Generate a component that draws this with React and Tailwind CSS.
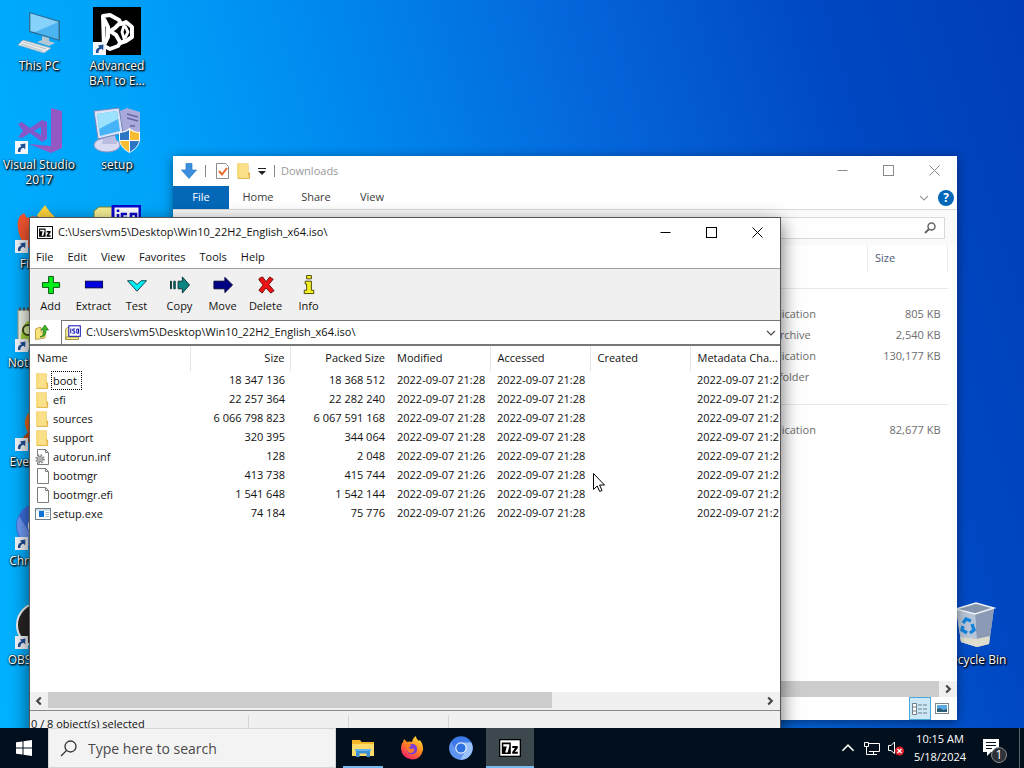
import React from "react";

const ARCHIVE_PATH = "C:\\Users\\vm5\\Desktop\\Win10_22H2_English_x64.iso\\";

/* ---------- shared glyphs ---------- */

function ShortcutArrow() {
  return (
    <svg viewBox="0 0 13 13" className="absolute bottom-0 left-0 h-[13px] w-[13px]" aria-hidden="true">
      <rect width="13" height="13" fill="#f3f6fa" />
      <path d="M3 11 C2.5 8 4 6 6.4 5.6 L5 3.6 L10.4 2.4 L10.2 8.2 L8.4 6.8 C6.4 7.2 5.4 8.6 5.4 11Z" fill="#1f4f96" />
    </svg>
  );
}

function Folder({ className }) {
  return (
    <svg viewBox="0 0 14 16" preserveAspectRatio="none" className={className} aria-hidden="true">
      <path d="M.5 .5 H11.5 V9 L13 10 V15.500 H.5Z" fill="#e3bb4c" />
      <path d="M.5 .5 H11 V10.5 L12 15.500 H.5Z" fill="#fbe08a" />
      <path d="M.5 .5 H2.5 V15.500 H.5Z" fill="#f8d873" />
      <path d="M12.5 10 V15.4 H1" fill="none" stroke="#e0b44a" />
    </svg>
  );
}

function SevenZip({ className }) {
  return (
    <svg viewBox="0 0 22 18" className={className} aria-hidden="true">
      <rect width="22" height="18" fill="#000" />
      <rect x="1.3" y="1.3" width="19.4" height="15.4" fill="#fff" />
      <rect x="2.800" y="3.500" width="9" height="11.500" fill="#000" />
      <path d="M4.3 5.200 H10.300 V7.400 L8.600 13.400 H6.200 L7.800 7.400 H4.300Z" fill="#fff" />
      <path d="M13.300 7 H18.800 V9 L15.900 12.800 H18.800 V14.800 H13.200 V12.900 L16 9 H13.300Z" fill="#000" />
    </svg>
  );
}

function IsoIcon({ className }) {
  return (
    <svg viewBox="0 0 16 16" className={className} aria-hidden="true">
      <path d="M.7 4 L2.5 2.5 H6 V14.5 H.7Z" fill="#f6ee9a" stroke="#8a8420" strokeWidth=".8" />
      <path d="M1 12 H13.500 V14.500 H1Z" fill="#f6ee9a" stroke="#8a8420" strokeWidth=".8" />
      <rect x="3.8" y=".8" width="11.5" height="10.5" fill="#fff" stroke="#1010b8" strokeWidth="1" />
      <path d="M5.8 3.5 V8.5 M10.2 4 H7.8 V6 H9.8 V8.2 H7.4 M11.8 4 H13.5 V8.2 H11.8Z" fill="none" stroke="#1010b8" strokeWidth="1" />
    </svg>
  );
}

/* ---------- desktop icons ---------- */

const art = {
  pc: (
    <svg viewBox="0 0 48 48" className="h-12 w-12">
      <path d="M14 5 L45 14 V34 L14 25Z" fill="#2f6c94" />
      <path d="M15.500 6.5 L43.500 15 V32.5 L15.500 24Z" fill="#4db4f2" />
      <path d="M15.500 6.5 L43.500 15 L20 25 L15.500 24Z" fill="#86d2fb" />
      <path d="M27 29 L34 31 V34 L40 36 L34 39 L22 35 L27 33Z" fill="#b5c7d2" />
      <path d="M8 33 L36 41 L29 46 L3 38Z" fill="#e8eced" stroke="#92a5ae" strokeWidth=".7" />
      <path d="M8 35 L31 42 M6 37 L28 44" stroke="#b6c1c7" />
    </svg>
  ),
  bat: (
    <svg viewBox="0 0 48 48" className="h-12 w-12">
      <rect width="48" height="48" fill="#000" />
      <path d="M10 9 L17 8 L26 13 L28 17 L33 15 L39 20 V30 L33 34 L27 36 L25 39 L17 42 L11 39Z" fill="none" stroke="#fff" strokeWidth="4" strokeLinejoin="round" />
      <path d="M11 12 L15 20 V30 L11 38 M27 16 L22 21 L17 24 L23 28 L27 35" fill="none" stroke="#fff" strokeWidth="4" />
      <path d="M32 15 L29 25 L32 35 M32 19 L35 25 L32 31" fill="none" stroke="#fff" strokeWidth="2.800" />
    </svg>
  ),
  vs: (
    <svg viewBox="0 0 48 48" className="h-12 w-12">
      <path d="M36 2 L47 5 V42 L36 47 L14 38 L36 40Z" fill="#9458c4" />
      <path d="M3 18 L7 16 L15 22 L27 14 L32 16 V33 L27 36 L15 27 L7 32 L3 31 L8 25Z M26 21 L19 25 L26 29Z" fill="#8558ca" fillRule="evenodd" />
    </svg>
  ),
  setup: (
    <svg viewBox="0 0 48 48" className="h-12 w-12">
      <path d="M27 5 L34 2 L47 6 V36 L38 39 L27 32Z" fill="#aaa9dc" />
      <path d="M34 8 L45 11 M34 12 L45 15 M37 20 H42" stroke="#6467a3" strokeWidth="1.5" />
      <ellipse cx="14" cy="39" rx="13" ry="7" fill="#d7daf0" stroke="#9094c1" />
      <path d="M11 29 H22 L24 38 H9Z" fill="#b9bde2" />
      <path d="M1 5 L26 2 L30 27 L5 33Z" fill="#dbe4f7" stroke="#7387bc" />
      <path d="M4 8 L24 5 L27 25 L7 30Z" fill="#47b3f7" />
      <path d="M4 8 L24 5 L25 13 L6 23Z" fill="#9be2ff" />
      <path d="M26 26 Q32 26 36.500 22 Q41 26 47 26 V34 Q46 42 36.500 47 Q27 42 26 34Z" fill="#fff" />
      <path d="M27 27 Q32 27 36 24 V34 H27Z M37 35 H46 Q45 41 37 46Z" fill="#2d76c4" />
      <path d="M37 24 Q41 27 46 27 V34 H37Z M27 35 H36 V46 Q28 41 27 35Z" fill="#f7bd32" />
    </svg>
  ),
  firefox: (
    <svg viewBox="0 0 48 48" className="h-12 w-12">
      <path d="M3 24 Q1 12 9 8 L12 13 Q19 10 22 12 L30 1 Q35 8 40 12 Q47 20 45 30 Q40 46 24 46 Q6 44 3 24Z" fill="#f4562f" />
      <path d="M22 10 L30 0 Q35 8 40 12 L45 24 L30 20Z" fill="#ffd43d" />
    </svg>
  ),
  iso: (
    <svg viewBox="0 0 48 48" className="h-12 w-12">
      <path d="M1 14 L1 6 L6 2 H20 V46 H1Z" fill="#f5ef94" stroke="#77873b" />
      <rect x="20" y="1" width="27" height="24" fill="#fff" stroke="#0808ce" strokeWidth="3" />
      <path d="M25 9 V19 M25 4.500 V7 M34 9 H29 V13 H33 V18 H28 M38 9 H43 V18 H38Z" stroke="#0808ce" strokeWidth="2.600" fill="none" />
    </svg>
  ),
  notepad: (
    <svg viewBox="0 0 48 48" className="h-12 w-12">
      <rect x="3" y="6" width="42" height="40" fill="#eef3e6" stroke="#8a9a80" />
      <path d="M4 5 H44" stroke="#555" strokeWidth="3" strokeDasharray="2 2" />
      <path d="M6 38 Q5 20 15 16 Q28 14 30 38Z" fill="#a6d63c" />
      <circle cx="13" cy="26" r="5" fill="#e2f3a6" stroke="#394b16" strokeWidth="2" />
    </svg>
  ),
  everything: (
    <svg viewBox="0 0 48 48" className="h-12 w-12">
      <circle cx="26" cy="20" r="13" fill="none" stroke="#e9681a" strokeWidth="6" />
      <path d="M19 28 L5 43" stroke="#bd4b10" strokeWidth="7" />
    </svg>
  ),
  chromium: (
    <svg viewBox="0 0 48 48" className="h-12 w-12">
      <circle cx="24" cy="24" r="23" fill="#3d6fe0" />
      <path d="M4 14 A23 23 0 0 0 20 46 L30 30 H14Z" fill="#6f9af4" />
      <circle cx="24" cy="24" r="11" fill="#fff" />
      <circle cx="24" cy="24" r="8" fill="#3575e8" />
    </svg>
  ),
  obs: (
    <svg viewBox="0 0 48 48" className="h-12 w-12">
      <circle cx="24" cy="24" r="22" fill="#292525" stroke="#f1f1f1" strokeWidth="2" />
      <circle cx="24" cy="16" r="7" fill="#ddd" />
    </svg>
  ),
  bin: (
    <svg viewBox="0 0 48 48" className="h-12 w-12">
      <path d="M5 8 L25 2 L43 7 L38 43 L26 46 L10 41Z" fill="#c4ccd8" />
      <path d="M24 12 L43 7 L38 43 L26 46Z" fill="#8b9bb5" />
      <path d="M5 8 L24 12 L26 46 L10 41Z" fill="#b7c5d6" />
      <path d="M5 8 L25 2 L43 7 L24 13Z" fill="#8594ad" stroke="#eef2f7" strokeWidth="1.4" />
      <path d="M9 36 L25 38 L39 35 L38 43 L26 46 L10 41Z" fill="#dedccd" />
      <path d="M12 22 L15 18 L20 20 M21 23 L23 29 L19 32 M16 32 L11 29 L12 25" fill="none" stroke="#1583dc" strokeWidth="3.4" />
    </svg>
  ),
};

function DesktopIcon({ icon, label, shortcut }) {
  return (
    <a href="#" className="flex h-[99px] w-[78px] flex-col items-center pt-[7px] text-center text-[12px] leading-[15px] text-white [text-shadow:1px_1px_2px_#000,1px_1px_2px_#000,0_0_2px_rgba(0,0,0,.8)]">
      <span className="relative mb-[3px] block h-12 w-12">
        {art[icon]}
        {shortcut && <ShortcutArrow />}
      </span>
      <span className="whitespace-pre">{label}</span>
    </a>
  );
}

const DESKTOP = [
  { icon: "pc", label: "This PC" },
  { icon: "bat", label: "Advanced\nBAT to E...", shortcut: true },
  { icon: "vs", label: "Visual Studio\n2017", shortcut: true },
  { icon: "setup", label: "setup" },
  { icon: "firefox", label: "Firefox", shortcut: true },
  { icon: "iso", label: "" },
  { icon: "notepad", label: "Notepad++", shortcut: true },
  null,
  { icon: "everything", label: "Everything", shortcut: true },
  null,
  { icon: "chromium", label: "Chromium", shortcut: true },
  null,
  { icon: "obs", label: "OBS Studio", shortcut: true },
];

/* ---------- window controls ---------- */

function WindowControls({ color }) {
  return (
    <div className={`flex ${color}`}>
      <button aria-label="Minimize" className="flex h-[29px] w-[45px] items-center justify-center">
        <svg viewBox="0 0 11 11" className="h-[11px] w-[11px]"><path d="M.5 5.500 H10.500" stroke="currentColor" /></svg>
      </button>
      <button aria-label="Maximize" className="flex h-[29px] w-[46px] items-center justify-center">
        <svg viewBox="0 0 11 11" className="h-[11px] w-[11px]"><rect x=".5" y=".5" width="10" height="10" fill="none" stroke="currentColor" /></svg>
      </button>
      <button aria-label="Close" className="flex h-[29px] w-[46px] items-center justify-center">
        <svg viewBox="0 0 11 11" className="h-[11px] w-[11px]"><path d="M.5 .5 L10.500 10.500 M10.500 .5 L.5 10.500" stroke="currentColor" /></svg>
      </button>
    </div>
  );
}

function Chevron({ dir, className }) {
  const d = { down: "M1 3 L5 7 L9 3", up: "M1 7 L5 3 L9 7", left: "M6.500 2 L3.500 5 L6.500 8", right: "M3.500 2 L6.500 5 L3.500 8" }[dir];
  const weight = dir === "left" || dir === "right" ? 1.8 : 1.1;
  return (
    <svg viewBox="0 0 10 10" className={className} aria-hidden="true">
      <path d={d} fill="none" stroke="currentColor" strokeWidth={weight} />
    </svg>
  );
}

/* ---------- Downloads explorer window ---------- */

const DOWNLOADS = [
  [
    ["Application", "805 KB"],
    ["7z Archive", "2,540 KB"],
    ["Application", "130,177 KB"],
    ["File folder", ""],
  ],
  [["Application", "82,677 KB"]],
];

function ExplorerWindow() {
  return (
    <section aria-label="Downloads" className="absolute left-[173px] top-[156px] flex h-[564px] w-[784px] flex-col bg-white text-[11px] text-[#6d6d6d] shadow-[0_2px_10px_rgba(0,0,0,0.45)]">
      <header className="flex h-[30px] items-start">
        <div className="flex h-full flex-1 items-center pl-2">
          <svg viewBox="0 0 16 16" className="h-4 w-4" aria-hidden="true"><path d="M5 .5 H11 V7 H15.5 L8 15.5 L.5 7 H5Z" fill="#3b8fdd" stroke="#2878c4" strokeWidth=".7" /></svg>
          <span className="ml-2 h-3 w-px bg-[#888]" />
          <svg viewBox="0 0 13 16" className="ml-[10px] h-4 w-[13px]" aria-hidden="true"><path d="M.5 .5 H9.5 L12.500 3.500 V15.500 H.5Z" fill="#fff" stroke="#8d8d8d" /><path d="M3 8 L6 11.500 L11 5" fill="none" stroke="#e8682c" strokeWidth="2" /></svg>
          <Folder className="ml-2 h-4 w-[14px]" />
          <svg viewBox="0 0 8 8" className="ml-[7px] h-2 w-2" aria-hidden="true"><path d="M0 1.500 H8" stroke="#222" /><path d="M0 4 H8 L4 8Z" fill="#222" /></svg>
          <span className="ml-2 h-3 w-px bg-[#888]" />
          <span className="ml-[6px] text-[#999]">Downloads</span>
        </div>
        <WindowControls color="text-[#8a8a8a]" />
      </header>
      <nav className="flex h-6 items-center border-b border-[#dadbdc] text-[#3c3c3c]">
        <button className="h-full w-14 bg-[#0467b8] text-white">File</button>
        <button className="h-full w-[58px]">Home</button>
        <button className="h-full w-[58px]">Share</button>
        <button className="h-full w-[54px]">View</button>
        <span className="flex-1" />
        <button aria-label="Expand ribbon" className="mr-[9px] text-[#999]"><Chevron dir="down" className="h-[10px] w-[10px]" /></button>
        <button aria-label="Help" className="mr-[3px] h-4 w-4 rounded-full bg-[#0467b8] text-[12px] font-bold leading-4 text-white">?</button>
      </nav>
      <div className="flex h-[35px] items-center justify-end bg-[#fafafa] pr-3">
        <label className="flex h-[22px] w-[260px] items-center border border-[#d9d9d9] bg-white pr-2">
          <input aria-label="Search Downloads" className="min-w-0 flex-1 outline-none" />
          <svg viewBox="0 0 12 12" className="h-3 w-3 text-[#666]" aria-hidden="true"><circle cx="7.500" cy="4.500" r="3.500" fill="none" stroke="currentColor" strokeWidth="1.500" /><path d="M5 7 L1 11" stroke="currentColor" strokeWidth="2" /></svg>
        </label>
      </div>
      <div className="flex-1 pr-[9px]">
        <table className="w-full table-fixed border-collapse">
          <colgroup><col /><col className="w-[109px]" /><col className="w-[80px]" /></colgroup>
          <thead>
            <tr className="h-[27px] text-left text-[#4c5a78]">
              <th /><th /><th className="border-x border-[#e9edf2] pl-[7px] font-normal">Size</th>
            </tr>
          </thead>
          {DOWNLOADS.map((group, g) => (
            <tbody key={g}>
              <tr className="h-8"><td colSpan={3} className="p-0"><hr className="border-[#e6e9ee]" /></td></tr>
              {group.map(([type, size], i) => (
                <tr key={i} className="h-[21px]">
                  <td />
                  <td>{type}</td>
                  <td className="pr-[7px] text-right">{size}</td>
                </tr>
              ))}
            </tbody>
          ))}
        </table>
      </div>
      <div className="flex h-4 bg-[#f0f0f0] text-[#444]">
        <span className="flex-1 bg-[#cdcdcd]" />
        <button aria-label="Scroll right" className="flex w-[18px] items-center justify-center"><Chevron dir="right" className="h-3 w-3" /></button>
      </div>
      <footer className="flex h-[23px] justify-end pr-1">
        <button aria-label="Details view" className="flex w-[22px] items-center justify-center border border-[#4aa9d8] bg-[#cce8f6]">
          <svg viewBox="0 0 16 14" className="h-[14px] w-4"><path d="M.5 1.500 H4.500 V12.500 H.5Z M.5 5 H4.500 M.5 9 H4.500" fill="#fff" stroke="#6f7f8b" /><path d="M6 3 H10 M11 3 H15 M6 7 H10 M11 7 H15 M6 11 H10 M11 11 H15" stroke="#6f7f8b" /></svg>
        </button>
        <button aria-label="Large icons view" className="flex w-[22px] items-center justify-center">
          <svg viewBox="0 0 14 11" className="h-[11px] w-[14px]"><rect x=".5" y=".5" width="13" height="10" fill="#fff" stroke="#7d8790" /><rect x="2" y="2" width="10" height="7" fill="#5aa9e6" /><path d="M2 9 V6 L5 5 L8 7 L12 6 V9Z" fill="#2b5e73" /></svg>
        </button>
      </footer>
    </section>
  );
}

/* ---------- 7-Zip window ---------- */

const tool = {
  Add: <path d="M8 1.500 H13 V8 H19.500 V13 H13 V19.500 H8 V13 H1.500 V8 H8Z" fill="#00f01c" stroke="#064d0a" />,
  Extract: <rect x="1.500" y="6.500" width="18" height="7" fill="#0000e0" stroke="#00004a" />,
  Test: <path d="M0.500 6 H6 L10.500 10 L15 6 H20.500 L10.500 17Z" fill="#00f0f8" stroke="#123f46" />,
  Copy: <path d="M.5 6.500 H1.500 V14.500 H.5Z M4 6.500 H5.500 V14.500 H4Z M8.500 6.500 H13 V2 L20.500 10.500 L13 19 V14.500 H8.500Z" fill="#0c8482" stroke="#053534" />,
  Move: <path d="M1 6.500 H12.500 V2.500 L20.500 10.500 L12.500 18.500 V14.500 H1Z" fill="#000084" stroke="#00003c" />,
  Delete: <path d="M3.500 3.500 L7 2 L10.500 7 L14.500 2 L18 4.500 L13.500 10 L19 16.500 L15.500 19 L10.500 13.500 L6.500 19 L3 16 L7.500 10.500 L3 5Z" fill="#ee1414" stroke="#6d0808" />,
  Info: <path d="M8 .5 H13 V4 H8Z M6.500 6.500 H13 V16 H15.500 V19.500 H5.500 V16 H8 V9.500 H6.500Z" fill="#f7f020" stroke="#44420a" />,
};

const FILES = [
  ["folder", "boot", "18 347 136", "18 368 512", "28"],
  ["folder", "efi", "22 257 364", "22 282 240", "28"],
  ["folder", "sources", "6 066 798 823", "6 067 591 168", "28"],
  ["folder", "support", "320 395", "344 064", "28"],
  ["inf", "autorun.inf", "128", "2 048", "26"],
  ["file", "bootmgr", "413 738", "415 744", "26"],
  ["file", "bootmgr.efi", "1 541 648", "1 542 144", "26"],
  ["exe", "setup.exe", "74 184", "75 776", "26"],
];

function FileIcon({ kind }) {
  if (kind === "folder") return <Folder className="ml-px mr-[2px] h-4 w-[13px]" />;
  if (kind === "exe")
    return (
      <svg viewBox="0 0 16 16" className="h-4 w-4" aria-hidden="true">
        <rect x=".5" y="2.500" width="15" height="11" fill="#fff" stroke="#71808d" />
        <rect x="4" y="5" width="5" height="6" fill="#0b73d6" />
        <path d="M1 4 H15 M10.500 6.500 H14 M10.500 8.500 H14 M10.500 10.500 H14" stroke="#a3b8c9" />
      </svg>
    );
  return (
    <svg viewBox="0 0 16 16" className="h-4 w-4" aria-hidden="true">
      <path d="M2.500 .5 H10.500 L13.500 3.500 V15.500 H2.500Z" fill="#fff" stroke="#7c7c7c" />
      <path d="M10.500 .5 V3.500 H13.500" fill="none" stroke="#7c7c7c" />
      {kind === "inf" && (
        <g fill="#ddd" stroke="#8a8a8a">
          <circle cx="5" cy="10" r="3.800" strokeWidth="2" strokeDasharray="1.500 1.500" />
          <circle cx="5" cy="10" r="2.600" />
          <circle cx="5" cy="10" r="1" fill="#fff" />
        </g>
      )}
    </svg>
  );
}

function SevenZipWindow() {
  const th = "border-r border-[#e5e5e5] font-normal";
  return (
    <section aria-label="7-Zip" className="absolute left-[29px] top-[217px] flex h-[520px] w-[752px] flex-col border border-[#555] bg-white text-[11px] text-[#111] shadow-[0_6px_18px_rgba(0,0,0,0.6)]">
      <header className="flex h-[29px] items-center">
        <div className="flex flex-1 items-center pl-[7px]">
          <SevenZip className="h-[13px] w-4" />
          <h1 className="ml-[5px]">{ARCHIVE_PATH}</h1>
        </div>
        <WindowControls color="text-black" />
      </header>
      <nav className="flex h-[22px] items-center gap-[14px] border-b border-[#a0a0a0] pl-[6px]">
        {["File", "Edit", "View", "Favorites", "Tools", "Help"].map((m) => <button key={m}>{m}</button>)}
      </nav>
      <div className="h-[51px] bg-[#f0f0f0]">
        <div className="-ml-px flex">
          {Object.keys(tool).map((name) => (
            <button key={name} className="flex w-[43px] flex-col items-center pt-[6px] leading-4">
              <svg viewBox="0 0 21 21" className="mb-[3px] h-5 w-5" aria-hidden="true">{tool[name]}</svg>
              {name}
            </button>
          ))}
        </div>
      </div>
      <div className="flex h-[26px] items-stretch border-b-2 border-[#777] bg-white">
        <button aria-label="Up one level" className="flex w-[31px] items-center pl-1">
          <svg viewBox="0 0 16 16" className="h-4 w-4" aria-hidden="true">
            <path d="M1.500 5 L5 3.500 H7 V8 H11 V14 L1.500 15.500Z" fill="#f7e27c" stroke="#b49331" strokeWidth=".8" />
            <path d="M6 13 Q10 12 9.500 6 H7 L11 1 L14.500 6 H12 Q12.500 13 6 13Z" fill="#41b52a" stroke="#1f6d14" strokeWidth=".7" />
          </svg>
        </button>
        <label className="flex flex-1 items-center border-l border-t border-[#777] pl-[3px] pr-1">
          <IsoIcon className="h-4 w-4" />
          <input aria-label="Address" readOnly value={ARCHIVE_PATH} className="ml-[5px] min-w-0 flex-1 outline-none" />
          <Chevron dir="down" className="h-[10px] w-[10px] text-[#444]" />
        </label>
      </div>
      <div className="mr-px flex-1 overflow-hidden">
        <table className="w-[760px] table-fixed border-collapse">
          <colgroup>
            <col className="w-[160px]" />
            {[0, 1, 2, 3, 4, 5].map((i) => <col key={i} className="w-[100px]" />)}
          </colgroup>
          <thead>
            <tr className="h-[25px] text-left">
              <th className={`${th} pl-[7px]`}>Name</th>
              <th className={`${th} pr-[5px] text-right`}>Size</th>
              <th className="pr-[5px] text-right font-normal">Packed Size</th>
              <th className={`${th} pl-[7px]`}>Modified</th>
              <th className={`${th} pl-[7px]`}>Accessed</th>
              <th className={`${th} pl-[7px]`}>Created</th>
              <th className="pl-[7px] font-normal">Metadata Cha...</th>
            </tr>
          </thead>
          <tbody className="whitespace-nowrap">
            {FILES.map(([kind, name, size, packed, min], i) => (
              <tr key={name} className="h-[19px]">
                <td className="p-0 pl-[5px] leading-[17px]">
                  <span className="flex items-center">
                    <FileIcon kind={kind} />
                    <span className={i === 0 ? "border border-dotted border-black pl-px pr-1" : "border border-transparent px-px"}>{name}</span>
                  </span>
                </td>
                <td className="p-0 pr-[5px] text-right">{size}</td>
                <td className="p-0 pr-[5px] text-right">{packed}</td>
                <td className="p-0 pl-[7px]">2022-09-07 21:{min}</td>
                <td className="p-0 pl-[7px]">2022-09-07 21:28</td>
                <td />
                <td className="p-0 pl-[7px]">2022-09-07 21:28</td>
              </tr>
            ))}
          </tbody>
        </table>
      </div>
      <div className="flex h-[18px] items-stretch bg-[#f0f0f0] text-[#444]">
        <button aria-label="Scroll left" className="flex w-[18px] items-center justify-center"><Chevron dir="left" className="h-3 w-3" /></button>
        <div className="flex-1"><div className="h-4 w-[504px] bg-[#cdcdcd]" /></div>
        <button aria-label="Scroll right" className="flex w-[20px] items-center justify-center"><Chevron dir="right" className="h-3 w-3" /></button>
      </div>
      <footer className="flex h-[26px] border-t border-[#888] bg-[#f0f0f0] pt-1 leading-[17px]">
        <span className="w-[219px] border-r border-[#d7d7d7] pl-px">0 / 8 object(s) selected</span>
        <span className="w-[100px] border-r border-[#d7d7d7]" />
        <span className="w-[100px] border-r border-[#d7d7d7]" />
      </footer>
    </section>
  );
}

/* ---------- taskbar ---------- */

function TaskButton({ label, state, children }) {
  const look = { active: "bg-[#3d474e]", open: "", idle: "" }[state];
  const line = { active: "w-12", open: "w-10", idle: "w-0" }[state];
  return (
    <button aria-label={label} className={`flex h-10 w-12 flex-col items-center ${look}`}>
      <span className="flex h-[38px] items-center pt-[2px]">{children}</span>
      <span className={`h-[2px] bg-[#76b9ed] ${line}`} />
    </button>
  );
}

function Taskbar() {
  return (
    <footer className="relative z-10 flex h-10 shrink-0 items-stretch bg-[#01101c] text-white">
      <button aria-label="Start" className="flex w-12 items-center justify-center">
        <svg viewBox="0 0 16 16" className="h-4 w-4"><path d="M0 2.300 L6.500 1.400 V7.500 H0Z M7.500 1.200 L16 0 V7.500 H7.500Z M0 8.500 H6.500 V14.600 L0 13.700Z M7.500 8.500 H16 V16 L7.500 14.800Z" fill="#fff" /></svg>
      </button>
      <label className="flex w-72 items-center border border-[#d5d5d5] bg-[#f3f3f3] pl-[11px]">
        <svg viewBox="0 0 17 17" className="h-[17px] w-[17px]" aria-hidden="true"><circle cx="10.500" cy="6.500" r="5.500" fill="none" stroke="#333" strokeWidth="1.300" /><path d="M6.500 10.500 L1 16" stroke="#333" strokeWidth="1.300" /></svg>
        <input aria-label="Search" placeholder="Type here to search" className="ml-[11px] min-w-0 flex-1 text-[14px] outline-none placeholder:text-[#4a4a4a]" />
      </label>
      <div className="ml-[3px] flex gap-px">
        <TaskButton label="File Explorer" state="open">
          <svg viewBox="0 0 22 18" className="h-[18px] w-[22px]"><path d="M0 1 H8 L9.500 3 H22 V17 H0Z" fill="#f5b62b" /><path d="M0 5 H22 V17 H0Z" fill="#fddb6a" /><path d="M4 18 V10.500 H18 V18 H14.500 V14.500 H7.500 V18Z" fill="#3a8fd6" /><path d="M3 10 H19 V12 H3Z" fill="#62b3f0" /></svg>
        </TaskButton>
        <TaskButton label="Firefox" state="idle">
          <svg viewBox="0 0 24 24" className="h-6 w-6">
            <defs><linearGradient id="ffx" x1=".8" y1="0" x2=".2" y2="1"><stop offset="0" stopColor="#ffe03a" /><stop offset=".45" stopColor="#ff8a1f" /><stop offset="1" stopColor="#f5156c" /></linearGradient></defs>
            <path d="M3 6 L4 3 L7 6 Q10 5 12 6 Q13 2 15.500 0 Q16.500 3 19 5 L20 4 Q23.500 9 23 14 Q21 23.500 12 23.500 Q2 22.500 1 13 Q1 8 3 6Z" fill="url(#ffx)" />
            <circle cx="12" cy="13" r="5.200" fill="#7a3fd8" />
            <path d="M6 8 Q9 7 12 10 Q9 10 9 12 Q11 14 14 12 Q15 17 10 17 Q6 15 6 8Z" fill="#ff7b26" />
          </svg>
        </TaskButton>
        <TaskButton label="Chromium" state="idle">
          <svg viewBox="0 0 24 24" className="h-6 w-6"><circle cx="12" cy="12" r="11.800" fill="#3f7be8" /><path d="M2 6 A11.800 11.800 0 0 0 11 23.800 L17 14 L7 14Z" fill="#5e93f0" /><path d="M12 6.500 H22.300 A11.800 11.800 0 0 1 11 23.800 L17 14Z" fill="#9cc2fb" /><circle cx="12" cy="12" r="5.800" fill="#e8f0fe" /><circle cx="12" cy="12" r="4.600" fill="#2f6fe0" /></svg>
        </TaskButton>
        <TaskButton label="7-Zip" state="active"><SevenZip className="h-[18px] w-[22px]" /></TaskButton>
      </div>
      <div className="ml-auto flex items-center">
        <button aria-label="Show hidden icons" className="mr-2"><Chevron dir="up" className="h-[14px] w-[14px]" /></button>
        <button aria-label="Network" className="mr-[6px]">
          <svg viewBox="0 0 18 15" className="h-[15px] w-[18px]"><path d="M4 5.500 V2.500 H16.500 V10.500 H5.500 M10.500 10.500 V13.500 M7 13.500 H14" fill="none" stroke="#fff" /><path d="M1.500 1.500 H5.500 V5.500 H1.500Z M3.500 5.500 V13.500 H7" fill="#01101c" stroke="#fff" /></svg>
        </button>
        <button aria-label="Volume, muted" className="mr-[7px]">
          <svg viewBox="0 0 18 16" className="h-4 w-[18px]"><path d="M1.500 5.500 H4 L7.500 2 V13.500 L4 10.500 H1.500Z" fill="none" stroke="#fff" /><circle cx="12.500" cy="11" r="4.500" fill="#e2202c" /><path d="M10.500 9 L14.500 13 M14.500 9 L10.500 13" stroke="#fff" strokeWidth="1.400" /></svg>
        </button>
        <time className="w-[56px] text-center text-[11px] leading-[18px]">10:15 AM<br />5/18/2024</time>
        <button aria-label="Notifications, 1 new" className="relative ml-[15px] mr-3 flex h-10 w-6 items-center">
          <svg viewBox="0 0 24 24" className="h-6 w-6"><path d="M0 3 H16 V16 H8 L4 20 V16 H0Z" fill="#fff" /><path d="M3 6.500 H13 M3 9.500 H13 M3 12.500 H9" stroke="#01101c" strokeWidth="1.200" /></svg>
          <span className="absolute right-0 top-[19px] h-4 w-4 rounded-full border border-[#8a8a8a] bg-[#2c3238] text-[12px] leading-[14px]">1</span>
        </button>
        <button aria-label="Show desktop" className="h-10 w-[5px] border-l border-[#59626a]" />
      </div>
    </footer>
  );
}

export default function App() {
  return (
    <div className="flex h-screen flex-col overflow-hidden bg-[#0178e6] font-['Open_Sans','Noto_Sans',sans-serif]">
      <main className="relative flex-1 bg-[linear-gradient(74deg,#00b2ff_0%,#00a5fa_24%,#0086ee_44%,#0562d8_65%,#0049c4_82%,#003db6_100%)]">
        <div className="grid w-[156px] grid-cols-2">
          {DESKTOP.map((d, i) => (d ? <DesktopIcon key={i} {...d} /> : <span key={i} />))}
        </div>
        <div className="absolute right-[10px] top-[594px]"><DesktopIcon icon="bin" label="Recycle Bin" /></div>
        <ExplorerWindow />
        <SevenZipWindow />
        <svg viewBox="0 0 12 19" className="absolute left-[593px] top-[473px] h-[19px] w-3" aria-hidden="true">
          <path d="M.5 .5 V16.500 L4.200 13 L6.700 18.500 L9 17.500 L6.600 12 H11.500Z" fill="#fff" stroke="#000" />
        </svg>
      </main>
      <Taskbar />
    </div>
  );
}
